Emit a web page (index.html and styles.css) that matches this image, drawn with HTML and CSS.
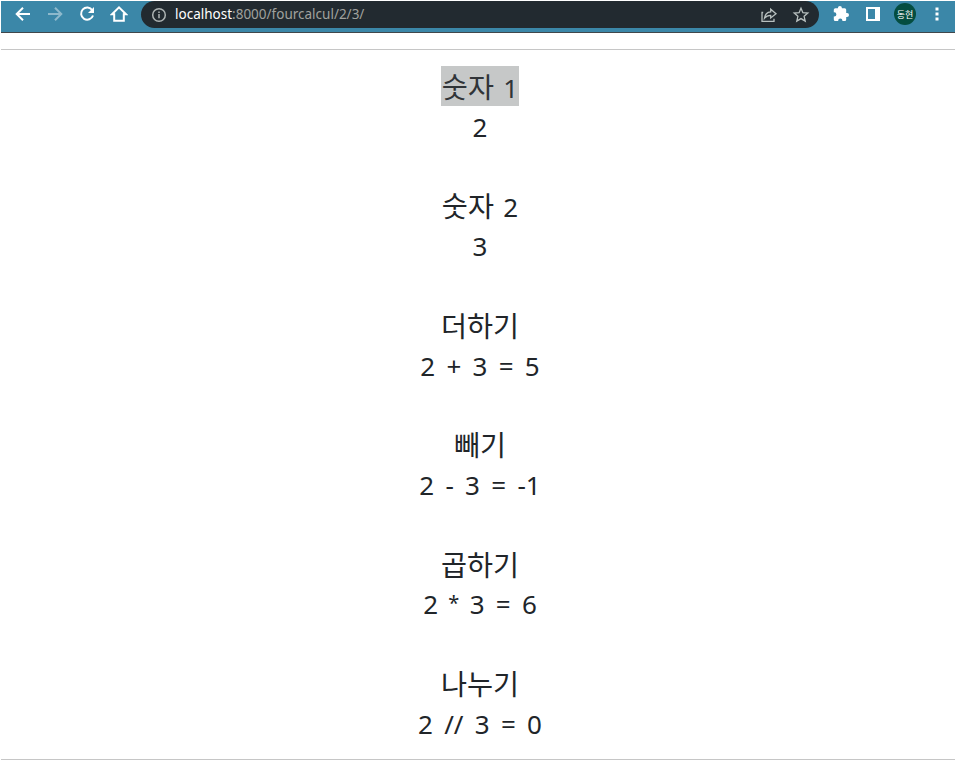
FILE: index.html
```html
<!DOCTYPE html>
<html lang="ko">
<head>
<meta charset="utf-8">
<title>fourcalcul</title>
<link rel="stylesheet" href="styles.css">
</head>
<body>
<header class="toolbar">
  <svg class="icon" viewBox="0 0 18 18"><path d="M16 9H3M9 2.7 2.7 9 9 15.3"/></svg>
  <svg class="icon dim" viewBox="0 0 18 18"><path d="M2 9h13M9 2.7 15.3 9 9 15.3"/></svg>
  <svg class="icon" viewBox="0 0 18 18"><path d="M14.3 5.2A6.1 6.1 0 1 0 15 10.5"/><path class="solid" d="M16 2v6h-6z"/></svg>
  <svg class="icon" viewBox="0 0 18 18"><path d="M2 9.2 9 2.3l7 6.9h-2.2v6.6H4.2V9.2z"/></svg>
  <div class="address">
    <svg class="info" viewBox="0 0 16 16"><circle cx="8" cy="8" r="6.3"/><path d="M8 7v4.3M8 4.4v1.5"/></svg>
    <span class="url"><b>localhost</b>:8000/fourcalcul/2/3/</span>
    <svg class="share" viewBox="0 0 18 18"><path d="M3.2 6.5H2v8.800h12v-2.500"/><path d="M4.500 12.200C5 8 7.200 6.200 10.700 5.900V3.200L16 7.700l-5.300 4.200V9.400c-2.800 0-4.700.9-6.200 2.800z"/></svg>
    <svg class="star" viewBox="0 0 18 18"><path d="m9 2.2 1.9 4.5 4.9.4-3.7 3.2 1.1 4.800L9 12.600l-4.200 2.500 1.100-4.800-3.700-3.200 4.900-.4z"/></svg>
  </div>
  <svg class="icon" viewBox="0 0 18 18"><path class="solid" d="M15 8h-.8V4.800A1.500 1.500 0 0 0 12.700 3.300H9.900V3a2 2 0 0 0-4 0v.3H3.300A1.500 1.500 0 0 0 1.800 4.800v2.500h.5a2.100 2.100 0 0 1 0 4.200h-.5v3a1.500 1.500 0 0 0 1.500 1.500h2.900v-.5a2.100 2.100 0 0 1 4.200 0v.5h2.300a1.500 1.500 0 0 0 1.500-1.500V12h.8a2 2 0 0 0 0-4z"/></svg>
  <svg class="icon" viewBox="0 0 18 18"><path class="solid" fill-rule="evenodd" d="M2 2h14v14H2zM4 4v10h7V4z"/></svg>
  <span class="avatar">동현</span>
  <svg class="icon" viewBox="0 0 18 18"><path class="solid" d="M7.500 2.500h3v3h-3zM7.500 7.500h3v3h-3zM7.500 12.500h3v3h-3z"/></svg>
</header>
<main class="results">
  <section><h3><mark>숫자 <span class="num">1</span></mark></h3><p>2</p></section>
  <section><h3>숫자 <span class="num">2</span></h3><p>3</p></section>
  <section><h3>더하기</h3><p>2 + 3 = 5</p></section>
  <section><h3>빼기</h3><p>2 - 3 = -1</p></section>
  <section><h3>곱하기</h3><p>2 <span class="times">*</span> 3 = 6</p></section>
  <section><h3>나누기</h3><p>2 // 3 = 0</p></section>
</main>
</body>
</html>
```
FILE: styles.css
```css
* { box-sizing: border-box; }
body {
  margin: 0;
  padding: 1px 0 0 1px;
  height: 766px;
  overflow: hidden;
  background: #fff;
  color: #212529;
  font-family: "Noto Sans", "Noto Sans CJK KR", sans-serif;
}
.toolbar {
  display: flex;
  align-items: flex-start;
  height: 32px;
  padding: 4px 9px 0 13px;
  gap: 14px;
  background: #3b87a8;
  border-bottom: 1px solid #41474b;
}
svg { display: block; flex: none; fill: none; stroke: #fff; stroke-width: 2; }
.solid { fill: #fff; stroke: none; }
.icon { width: 18px; height: 18px; }
.dim { opacity: .42; }
.address {
  display: flex;
  align-items: center;
  width: 678px;
  height: 27px;
  margin: -4px -1px 0;
  padding: 0 9px 0 10px;
  border-radius: 14px;
  background: #222a30;
  color: #a0a19e;
  font-size: 13.5px;
}
.info { width: 16px; height: 16px; stroke: #aeb4b4; stroke-width: 1.5; }
.url { flex: 1; margin: -1px 0 0 8px; white-space: nowrap; }
.url b { color: #fff; font-weight: 400; }
.share, .star { width: 18px; height: 18px; stroke: #b8c0bf; stroke-width: 1.3; }
.star { margin-left: 14px; }
.avatar {
  display: flex;
  align-items: center;
  justify-content: center;
  width: 22px;
  height: 22px;
  margin: -2px -2px 0;
  border-radius: 50%;
  background: #044d40;
  color: #fff;
  font-size: 9px;
}
.results {
  height: 711px;
  margin-top: 16px;
  padding-top: 16px;
  border: solid #c6c6c6;
  border-width: 1px 0;
  font-size: 26px;
  line-height: 39.8px;
  text-align: center;
}
section { height: 119.4px; padding-left: 4px; }
h3, p { margin: 0; font-weight: 400; }
h3 { height: 39.8px; font-size: 28.3px; line-height: 42.5px; }
p { padding-top: 2px; word-spacing: 4.5px; }
mark { display: inline-block; height: 40px; padding: 0 1px; background: #c6c8c8; color: #303438; }
.num { margin-left: 2px; font-size: 26px; }
.times { margin: 0 -1px; font-size: 20px; line-height: 1; vertical-align: 4px; }
```
